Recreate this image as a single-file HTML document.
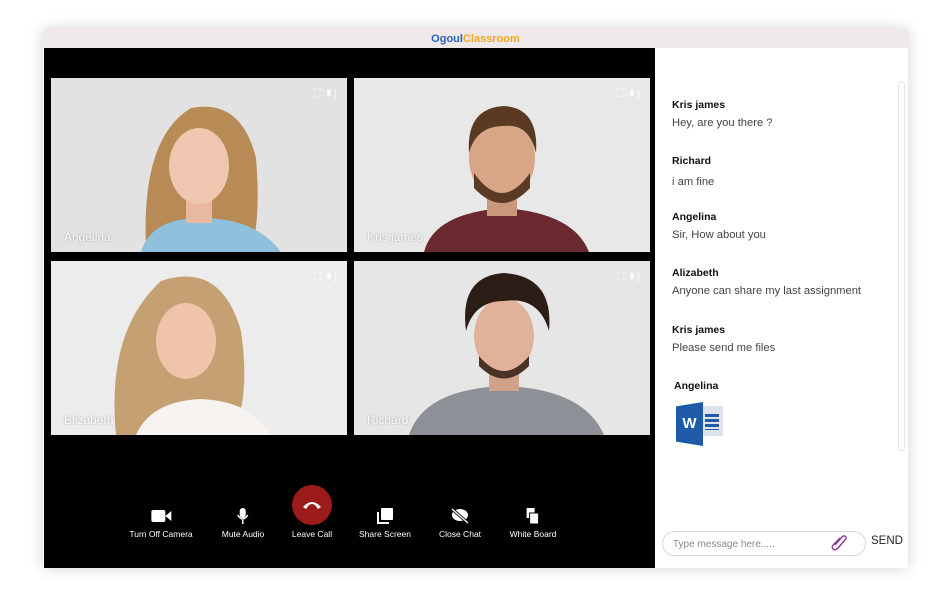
<!DOCTYPE html>
<html><head><meta charset="utf-8">
<style>
*{margin:0;padding:0;box-sizing:border-box}
body{width:950px;height:594px;background:#fff;position:relative;overflow:hidden;font-family:"Liberation Sans",sans-serif}
.win{position:absolute;left:43px;top:29px;width:865px;height:539px;box-shadow:0 0 14px rgba(0,0,0,.18);background:#fff}
.title{position:absolute;left:0;top:0;width:865px;height:19px;background:#efe9ea;text-align:center;font-size:11px;font-weight:bold;line-height:21px}
.stage{position:absolute;left:1px;top:19px;width:611px;height:520px;background:#000}
.tile{position:absolute;width:296px;height:174px;background:#e4e4e4;overflow:hidden}
.tile .nm{position:absolute;left:13px;bottom:8px;color:#fff;font-size:12px;opacity:.85;text-shadow:0 0 2px rgba(0,0,0,.4)}
.tile .ic{position:absolute;right:10px;top:10px;color:#fff;font-size:11px;opacity:.8}
.ctrl{position:absolute;top:0;color:#fff;font-size:8.5px;text-align:center;transform:translateX(-50%);white-space:nowrap}
.ctrl .i{height:16px;margin-bottom:5px;display:flex;justify-content:center;align-items:center}
.chat{position:absolute;left:612px;top:19px;width:253px;height:520px;background:#fff}
.msg{position:absolute;left:17px;font-size:11.2px;color:#444}
.msg b{display:block;color:#111;font-size:10.5px;margin-bottom:6px}
</style></head><body>
<div class="win">
 <div class="title"><span style="color:#2a62b8">Ogoul</span><span style="color:#f0a81c">Classroom</span></div>
 <div class="stage">
  <div class="tile" style="left:7px;top:30px">
   <svg width="296" height="174"><rect width="296" height="174" fill="#e2e2e2"/>
   <path d="M95 170 Q90 60 140 30 Q190 20 205 80 Q210 140 200 174 Z" fill="#b88a55"/>
   <path d="M90 174 Q100 140 150 140 Q205 140 230 174Z" fill="#8fc1dc"/>
   <rect x="135" y="110" width="26" height="35" fill="#e8b9a0"/>
   <ellipse cx="148" cy="88" rx="30" ry="38" fill="#efc7b0"/></svg>
   <div class="nm">Angelina</div><div class="ic">⛶ ▮)</div></div>
  <div class="tile" style="left:310px;top:30px">
   <svg width="296" height="174"><rect width="296" height="174" fill="#e8e8e8"/>
   <path d="M70 174 Q80 135 150 130 Q220 135 235 174Z" fill="#6a2a30"/>
   <rect x="133" y="110" width="30" height="28" fill="#c99779"/>
   <ellipse cx="148" cy="80" rx="33" ry="42" fill="#d9a587"/>
   <path d="M115 75 Q112 30 150 28 Q185 30 182 75 Q175 45 150 48 Q122 48 115 75Z" fill="#5b3a24"/>
   <path d="M120 95 Q148 135 176 95 L176 110 Q148 140 120 110Z" fill="#5b3a24"/></svg>
   <div class="nm">Kris james</div><div class="ic">⛶ ▮)</div></div>
  <div class="tile" style="left:7px;top:213px">
   <svg width="296" height="174"><rect width="296" height="174" fill="#ececec"/>
   <path d="M65 174 Q55 70 110 20 Q170 0 190 70 Q200 140 180 174Z" fill="#c4a072"/>
   <path d="M85 174 Q100 140 150 138 Q200 140 220 174Z" fill="#f6f3f0"/>
   <ellipse cx="135" cy="80" rx="30" ry="38" fill="#efc4ab"/></svg>
   <div class="nm">Elizabeth</div><div class="ic">⛶ ▮)</div></div>
  <div class="tile" style="left:310px;top:213px">
   <svg width="296" height="174"><rect width="296" height="174" fill="#e6e6e6"/>
   <path d="M55 174 Q70 128 150 125 Q230 128 250 174Z" fill="#8d9097"/>
   <rect x="135" y="100" width="30" height="30" fill="#d0a389"/>
   <ellipse cx="150" cy="75" rx="30" ry="38" fill="#e0b29a"/>
   <path d="M112 70 Q105 15 150 12 Q200 15 195 70 Q185 35 150 40 Q120 40 112 70Z" fill="#2c1d16"/>
   <path d="M125 95 Q150 125 175 95 L175 105 Q150 130 125 105Z" fill="#4a3226"/></svg>
   <div class="nm">Richard</div><div class="ic">⛶ ▮)</div></div>
  <div style="position:absolute;left:248px;top:437px;width:40px;height:40px;border-radius:50%;background:#9c1b1b"></div>
  <svg style="position:absolute;left:257px;top:449px" width="22" height="14"><path d="M2 10 Q11 0 20 10 L17 12 L14 8 Q11 6 8 8 L5 12Z" fill="#fff"/></svg>
  <div style="position:absolute;left:0;top:460px;width:611px">
   <div class="ctrl" style="left:117px"><div class="i"><div style="width:14px;height:12px;background:#fff;border-radius:2px"></div><div style="width:0;height:0;border-top:5px solid transparent;border-bottom:5px solid transparent;border-right:6px solid #fff"></div></div>Turn Off Camera</div>
   <div class="ctrl" style="left:199px"><div class="i"><svg width="12" height="16"><rect x="3" y="0" width="6" height="10" rx="3" fill="#fff"/><path d="M1 7 Q6 15 11 7" stroke="#fff" stroke-width="1.5" fill="none"/><rect x="5.3" y="12" width="1.5" height="4" fill="#fff"/></svg></div>Mute Audio</div>
   <div class="ctrl" style="left:268px"><div class="i"></div>Leave Call</div>
   <div class="ctrl" style="left:341px"><div class="i"><svg width="17" height="16"><rect x="5" y="0" width="12" height="12" rx="1" fill="#fff"/><path d="M2 4 V15 H13" stroke="#fff" stroke-width="2" fill="none"/></svg></div>Share Screen</div>
   <div class="ctrl" style="left:416px"><div class="i"><svg width="18" height="16"><ellipse cx="9" cy="7" rx="8" ry="6" fill="#fff"/><path d="M1 1 L17 15" stroke="#000" stroke-width="3"/><path d="M1 1 L17 15" stroke="#fff" stroke-width="1.3"/></svg></div>Close Chat</div>
   <div class="ctrl" style="left:489px"><div class="i"><svg width="14" height="16"><rect x="1" y="0" width="8" height="10" fill="#fff"/><rect x="4" y="5" width="9" height="11" fill="#fff" stroke="#000" stroke-width="1"/></svg></div>White Board</div>
  </div>
 </div>
 <div class="chat">
  <div style="position:absolute;left:243px;top:33px;width:7px;height:370px;border:1px solid #e6e6e6;border-radius:4px"></div>
  <div class="msg" style="top:51px"><b>Kris james</b>Hey, are you there ?</div>
  <div class="msg" style="top:107px"><b>Richard</b><span style="display:block;margin-top:9px">i am fine</span></div>
  <div class="msg" style="top:163px"><b>Angelina</b>Sir, How about you</div>
  <div class="msg" style="top:219px"><b>Alizabeth</b><span style="display:block;margin-top:3px">Anyone can share my last assignment</span></div>
  <div class="msg" style="top:276px"><b>Kris james</b>Please send me files</div>
  <div class="msg" style="top:332px;left:19px"><b>Angelina</b></div>
  <div style="position:absolute;left:34px;top:358px;width:34px;height:30px;background:#dde3ea"></div>
  <div style="position:absolute;left:21px;top:354px;width:27px;height:44px;background:#1e5aa8;clip-path:polygon(0 10%,100% 0,100% 100%,0 90%);color:#fff;font-weight:bold;font-size:15px;line-height:44px;text-align:center">W</div>
  <div style="position:absolute;left:50px;top:366px;width:14px;height:16px;background:repeating-linear-gradient(#1e5aa8 0 3px,transparent 3px 5px)"></div>
  <div style="position:absolute;left:7px;top:483px;width:204px;height:25px;border:1px solid #d8d8d8;border-radius:13px;font-size:10px;color:#888;padding:7px 0 0 10px">Type message here.....</div>
  <svg style="position:absolute;left:176px;top:485px" width="16" height="18"><path d="M4 12 L11 4 Q13 2 14.5 3.5 Q16 5 14 7 L7 15 Q4 18 2 16 Q0 14 3 11 L9 5" stroke="#8a3a9a" stroke-width="1.4" fill="none"/></svg>
  <div style="position:absolute;left:216px;top:487px;font-size:11.5px;color:#222">SEND</div>
 </div>
</div>
</body></html>
